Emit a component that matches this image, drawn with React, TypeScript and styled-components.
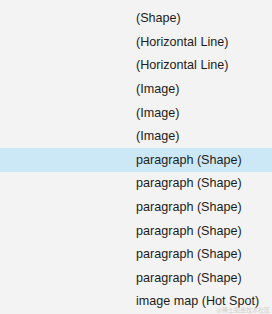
import React from 'react'
import styled, { createGlobalStyle } from 'styled-components'

const GlobalStyle = createGlobalStyle`
  html, body {
    margin: 0;
    padding: 0;
    background: #f3f3f3;
  }
`

const Panel = styled.div`
  position: relative;
  width: 272px;
  height: 314px;
  overflow: hidden;
  background: #f3f3f3;
  padding-top: 6.4px;
  box-sizing: border-box;
  font-family: 'Liberation Sans', Arial, sans-serif;
`

const List = styled.ul`
  list-style: none;
  margin: 0;
  padding: 0;
`

const Row = styled.li<{ $selected?: boolean }>`
  height: 23.6px;
  display: flex;
  align-items: center;
  padding-left: 136px;
  font-size: 12.6px;
  color: #1c1c1c;
  white-space: nowrap;
  background: ${(p) => (p.$selected ? '#cce8f6' : 'transparent')};
`

const Watermark = styled.span`
  position: absolute;
  right: 2px;
  bottom: 0;
  font-family: 'Noto Sans CJK SC', sans-serif;
  font-size: 6px;
  line-height: 8px;
  color: #cfcfcf;
`

const items = [
  '(Shape)',
  '(Horizontal Line)',
  '(Horizontal Line)',
  '(Image)',
  '(Image)',
  '(Image)',
  'paragraph (Shape)',
  'paragraph (Shape)',
  'paragraph (Shape)',
  'paragraph (Shape)',
  'paragraph (Shape)',
  'paragraph (Shape)',
  'image map (Hot Spot)',
]

export default function App() {
  return (
    <>
      <GlobalStyle />
      <Panel>
        <List>
          {items.map((label, i) => (
            <Row key={i} $selected={i === 6}>
              {label}
            </Row>
          ))}
        </List>
        <Watermark>@稀土掘金技术社区</Watermark>
      </Panel>
    </>
  )
}
